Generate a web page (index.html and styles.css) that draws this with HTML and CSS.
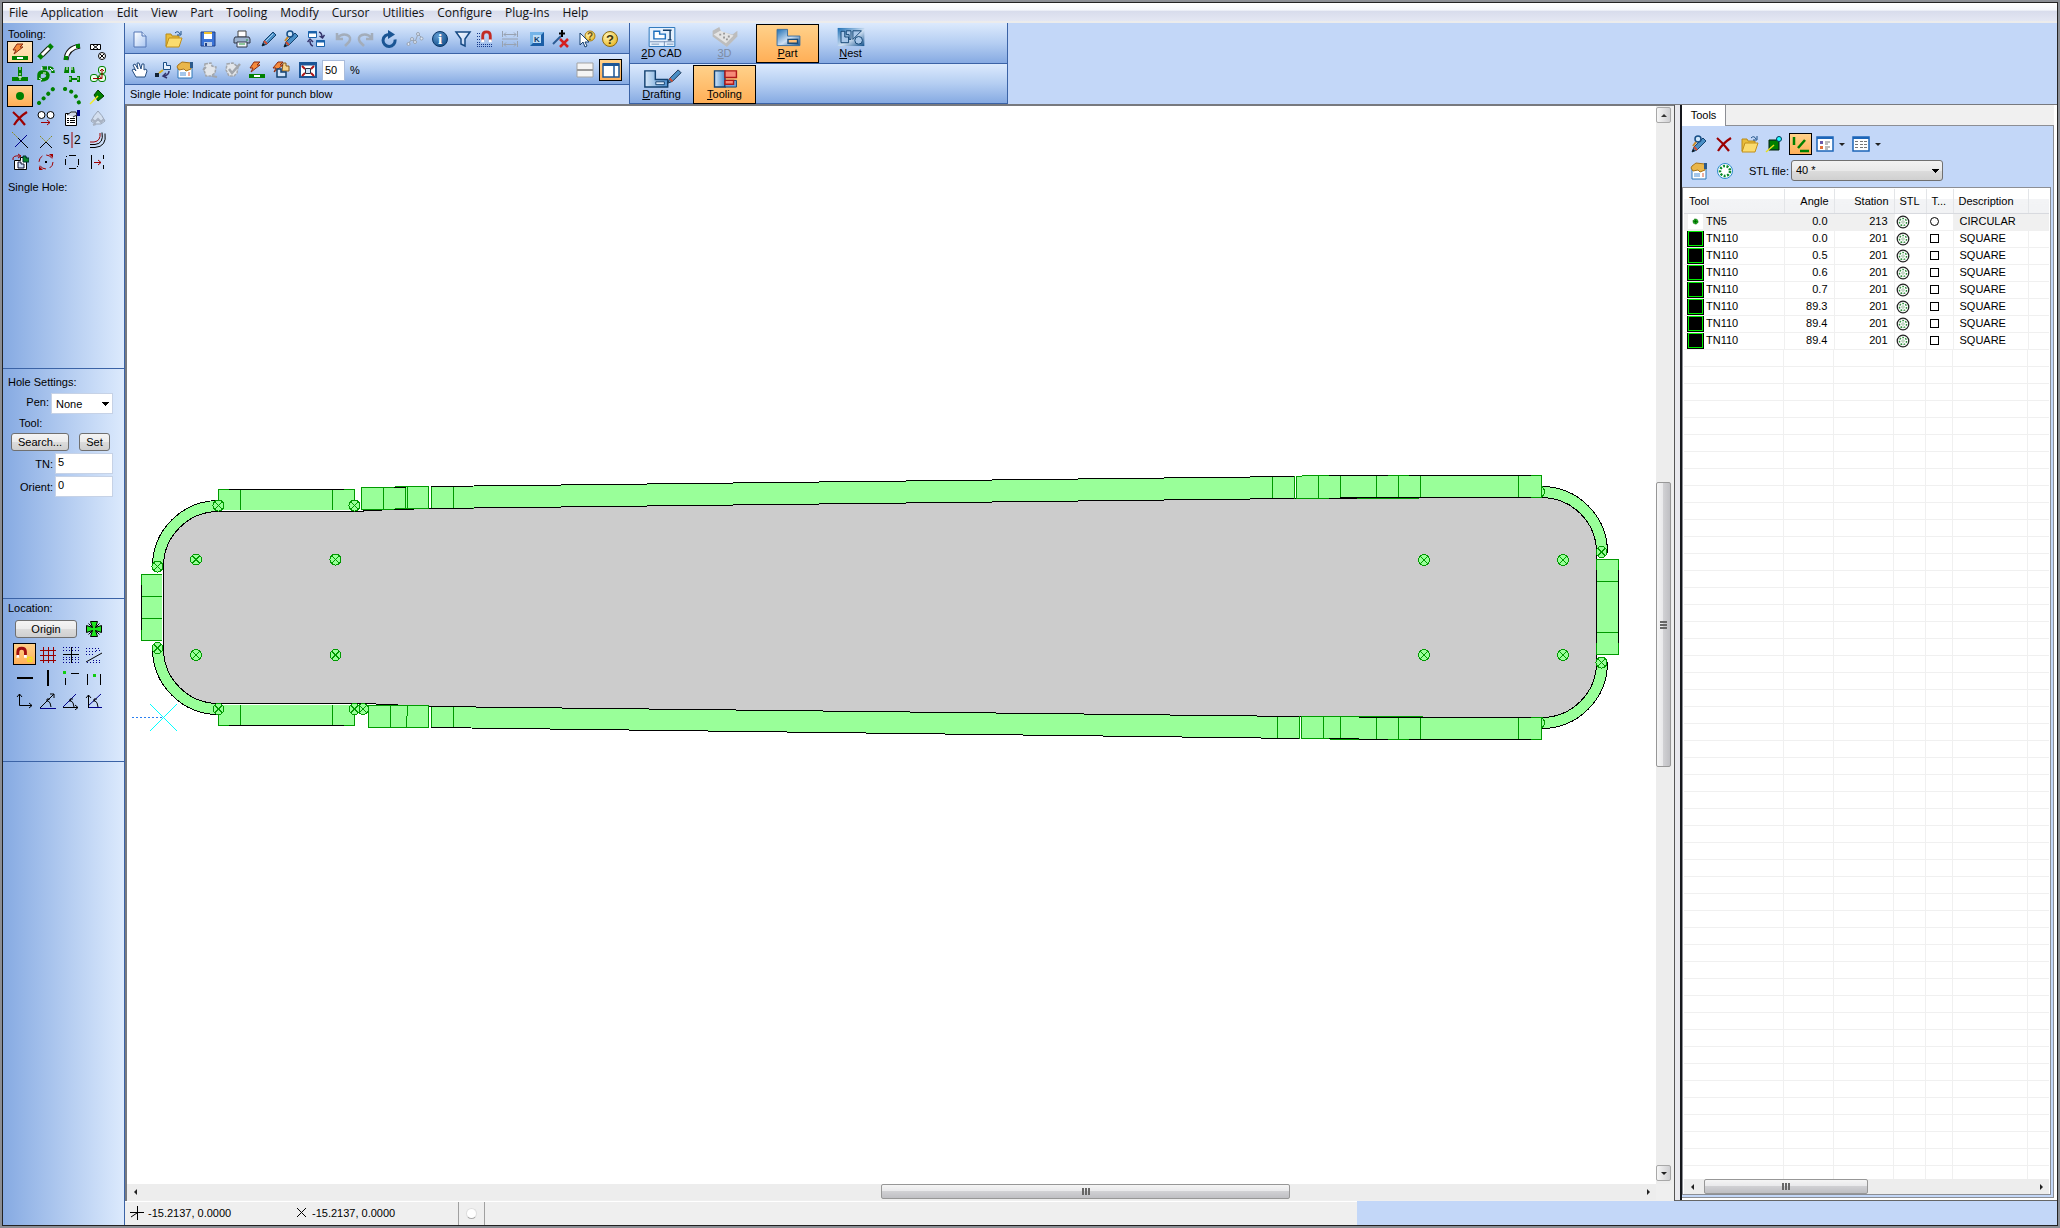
FILE: index.html
```html
<!DOCTYPE html>
<html lang="en">
<head>
<meta charset="utf-8">
<title>Part Tooling</title>
<link rel="stylesheet" href="styles.css">
</head>
<body>
<svg class="defs" aria-hidden="true">
  <defs>
    <linearGradient id="g-page" x1="0" y1="0" x2="1" y2="1"><stop offset="0" stop-color="#fff"/><stop offset="1" stop-color="#a9c6f2"/></linearGradient>
    <linearGradient id="g-steel" x1="0" y1="0" x2="1" y2="1"><stop offset="0" stop-color="#1d6fb4"/><stop offset=".55" stop-color="#cfe0f3"/><stop offset="1" stop-color="#13518c"/></linearGradient>
    <linearGradient id="g-sheet" x1="0" y1="0" x2="1" y2="0"><stop offset="0" stop-color="#d5e6f8"/><stop offset="1" stop-color="#4d90cf"/></linearGradient>
    <radialGradient id="g-gold" cx=".35" cy=".3" r=".8"><stop offset="0" stop-color="#fff6b8"/><stop offset="1" stop-color="#e8b41c"/></radialGradient>
    <radialGradient id="g-info" cx=".35" cy=".3" r=".8"><stop offset="0" stop-color="#5f9ad0"/><stop offset="1" stop-color="#0f4a86"/></radialGradient>
    <symbol id="i-bolt" viewBox="0 0 18 18"><path d="M6 1h6L9 4h3L3 11l2-4H2z" fill="#f58a3c" stroke="#8a2a10"/><path d="M1 13h16v4H1z" fill="#008000"/><path d="M6 14h6v2H6z" fill="#fff"/></symbol>
    <symbol id="i-folder" viewBox="0 0 18 18"><path d="M1 4h5l1 2h7v3H5l-4 7z" fill="#e9bd3a" stroke="#b98a17"/><path d="M4 8h13l-3 9H1z" fill="#fbdc6e" stroke="#c2901a"/><path d="M10 3q3-3 5 1M16 1v4h-4" fill="none" stroke="#1b4f86"/></symbol>
    <symbol id="i-find" viewBox="0 0 18 18"><path d="M2 17l2-5L13 3l3 3-9 9z" fill="#4a8fc6" stroke="#15436f"/><path d="M2 17l1-3 2 2z" fill="#111"/><path d="M4 12l3 3" stroke="#d24c30" stroke-width="2"/><circle cx="8" cy="4" r="3" fill="#cfe7fb" stroke="#164e86" stroke-width="1.5"/><path d="M6 7L3 11" stroke="#c98a28" stroke-width="2"/></symbol>
    <symbol id="i-card" viewBox="0 0 18 18"><path d="M2 6h14v11H2z" fill="#fff" stroke="#2c76b8"/><path d="M2 4l4-3 9 1v6l-5 2-2-2-5 1-2-3z" fill="#e9b64a" stroke="#a8741a"/><path d="M14 1h3v6h-3z" fill="#2b5a8c"/><path d="M4 12h6M4 14h6" stroke="#4a8ed6"/><path d="M12 12h2M12 14h2" stroke="#e2603a"/></symbol>
    <symbol id="i-x" viewBox="0 0 18 18"><path d="M2 3q6 5 12 13M16 3Q8 8 3 16" fill="none" stroke="#9c0000" stroke-width="2.2"/></symbol>
    <symbol id="i-wheel" viewBox="0 0 18 18"><circle cx="9" cy="9" r="6.500" fill="#fff" stroke="#222" stroke-width="1.4"/><circle cx="9" cy="9" r="4" fill="none" stroke="#2f8f3c" stroke-width="1.6" stroke-dasharray="2 1.5"/><circle cx="9" cy="9" r="1.4" fill="none" stroke="#9ab89c"/></symbol>
    <symbol id="i-magnet" viewBox="0 0 18 18"><path d="M5 12V6q0-4 4-4t4 4v6" fill="none" stroke="#c22a22" stroke-width="3"/><path d="M5 10v3M13 10v3" stroke="#fff" stroke-width="3"/></symbol>
    <g id="hole"><circle r="5.5" fill="#9f9" stroke="#090"/><path d="M-4-4L4 4M4-4L-4 4" stroke="#090"/></g>
  </defs>
</svg>

<div class="app">
  <nav class="menu">
    <a href="#">File</a><a href="#">Application</a><a href="#">Edit</a><a href="#">View</a><a href="#">Part</a><a href="#">Tooling</a><a href="#">Modify</a><a href="#">Cursor</a><a href="#">Utilities</a><a href="#">Configure</a><a href="#">Plug-Ins</a><a href="#">Help</a>
  </nav>
  <div class="body">
    <aside class="side">
      <section class="sec sec-tooling">
        <h2>Tooling:</h2>
        <div class="tools">
          <button class="on light" aria-label="Punch"><svg><use href="#i-bolt"/></svg></button>
          <button aria-label="Line"><svg viewBox="0 0 18 18"><path d="M2 15L15 2" stroke="#008000" stroke-width="5"/><path d="M5 12l7-7" stroke="#222" stroke-width="5"/><path d="M5 12l7-7" stroke="#fff" stroke-width="3"/></svg></button>
          <button aria-label="Arc"><svg viewBox="0 0 18 18"><path d="M3 17Q4 5 17 3" fill="none" stroke="#111" stroke-width="5"/><path d="M3 17Q4 5 17 3" fill="none" stroke="#fff" stroke-width="3"/><path d="M1 13h4v4H1zM13 1h4v4h-4z" fill="#008000"/></svg></button>
          <button aria-label="Shapes"><svg viewBox="0 0 18 18" fill="#fff" stroke="#000"><path d="M1.500 1.500h10v5h-10zM4 2l5 4M9 2L4 6" /><circle cx="13" cy="13" r="3.500"/><path d="M11 11l4 4M15 11l-4 4"/></svg></button>
          <button aria-label="Corner"><svg viewBox="0 0 18 18"><path d="M7 2h4v10H7zM1 12h16v4H1z" fill="#008000"/><path d="M9 2v3M9 8v2M7 12h4M9 11v4" stroke="#fff"/></svg></button>
          <button aria-label="Contour"><svg viewBox="0 0 18 18" fill="none"><path d="M5 3h8q3 0 3 5" stroke="#008000" stroke-width="3.500" stroke-dasharray="5 1"/><path d="M2 15V10q0-3 4-3t5 3q0 5-7 5" stroke="#008000" stroke-width="3.500"/><path d="M5 2v3M13 3l3 3M2 13l3 2M6 8h3" stroke="#fff"/></svg></button>
          <button aria-label="Slots"><svg viewBox="0 0 18 18"><path d="M2 2h4v6H1zM8 2h3l1 6H8zM6 11h3v2h5v-2h3v6h-3v-2H9v2H6z" fill="#008000"/><path d="M4 2v3M9 2v3M7 12v3M15 12v3" stroke="#fff"/></svg></button>
          <button aria-label="Path"><svg viewBox="0 0 18 18" fill="none"><rect x="9.500" y="1.500" width="7" height="7" rx="2.500" fill="#eafbe9" stroke="#008000"/><rect x="1.500" y="9.500" width="7" height="7" rx="2.500" fill="#eafbe9" stroke="#008000"/><rect x="9.500" y="9.500" width="7" height="7" rx="2.500" fill="#eafbe9" stroke="#008000"/><path d="M4 13.500h9V4M10 11l3 2.500M11 6l2-2 2 2" stroke="#a00000"/></svg></button>
          <button class="on" aria-label="Single hole"><svg viewBox="0 0 18 18"><circle cx="9" cy="9" r="4" fill="#008000"/></svg></button>
          <button aria-label="Line of holes"><svg viewBox="0 0 18 18"><path d="M2 16L16 2" stroke="#008000" stroke-width="4" stroke-linecap="round" stroke-dasharray="0.100 6.400"/></svg></button>
          <button aria-label="Arc of holes"><svg viewBox="0 0 18 18"><path d="M2 2Q12 4 16 16" fill="none" stroke="#008000" stroke-width="4" stroke-linecap="round" stroke-dasharray="0.100 6.600"/></svg></button>
          <button aria-label="Pick tool"><svg viewBox="0 0 18 18"><path d="M9 3l6 6-6 5-4-6z" fill="#008000" stroke="#003c00"/><path d="M1 17l8-8" stroke="#f4ee22" stroke-width="1.500"/></svg></button>
          <button aria-label="Delete"><svg><use href="#i-x"/></svg></button>
          <button aria-label="Order"><svg viewBox="0 0 18 18"><circle cx="4.500" cy="6" r="3.500" fill="#fff" stroke="#000"/><circle cx="13.500" cy="6" r="3.500" fill="#fff" stroke="#000"/><path d="M4 13.500h9M10 11l3 2.500-3 2.500" fill="none" stroke="#a00000"/></svg></button>
          <button aria-label="Properties"><svg viewBox="0 0 18 18"><path d="M2.500 4.500h11v12h-11z" fill="#fff" stroke="#000"/><path d="M4 6l4-3h5l1 3-4 2" fill="#cfd6e8" stroke="#222"/><path d="M14 1h3v6h-3z" fill="#00008b"/><path d="M4 9.500h2M4 11.500h2M4 13.500h2M7 9.500h5M7 11.500h5M7 13.500h5" stroke="#000"/></svg></button>
          <button aria-label="Rotate" disabled><svg viewBox="0 0 18 18" fill="none" stroke="#9aa6b8"><path d="M9 2q4 4 7 10l-4 3H6l-4-3Q5 6 9 2z" fill="#d3dfef"/><path d="M3 10l3 3 3-3 3 3 3-3M4 16l3-1" stroke="#a8b2c2" stroke-width="2"/></svg></button>
          <button aria-label="Trim"><svg viewBox="0 0 18 18"><path d="M1 1l6 6" stroke="#8c8c20" stroke-dasharray="2 1"/><path d="M7 7l10 10" stroke="#000"/><path d="M16 4L4 16" stroke="#00008b"/></svg></button>
          <button aria-label="Trim both"><svg viewBox="0 0 18 18"><path d="M3 5l6 6M15 5l-6 6" stroke="#8c8c20" stroke-dasharray="2 1"/><path d="M9 11l-6 6M9 11l6 6" stroke="#000"/></svg></button>
          <button aria-label="Split"><svg viewBox="0 0 18 18"><text class="digit" x="0" y="13">5</text><text class="digit" x="11" y="13">2</text><path d="M9 1v16" stroke="#a00000"/></svg></button>
          <button aria-label="Offset"><svg viewBox="0 0 18 18" fill="none" stroke="#000"><path d="M1 11h4q7-1 6-9" stroke="#a00000"/><path d="M1 13.500h5q9-1 7-12M1 16.500h5q12-1 10-14"/></svg></button>
          <button aria-label="Copy contour"><svg viewBox="0 0 18 18"><path d="M3.500 7.500h6v-3h6v12h-12z" fill="#fff" stroke="#000"/><path d="M7 9h3v2h3v4H7z" fill="#cfe2fa" stroke="#113"/><path d="M12 3h3v2h3v4h-6z" fill="#0a8a2a" stroke="#033"/><path d="M2 7q-1-5 7-4M7 1l3 2-3 2" fill="none" stroke="#a00000"/></svg></button>
          <button aria-label="Revolve"><svg viewBox="0 0 18 18"><circle cx="9" cy="9" r="7" fill="none" stroke="#a00000" stroke-dasharray="7 4"/><path d="M8 8h2v2H8z"/><path d="M12 1h4v4zM2 13v4h4z" fill="#a00000"/></svg></button>
          <button aria-label="Frame"><svg viewBox="0 0 18 18" fill="none" stroke="#000"><path d="M6 2.500h7M6 15.500h7M2.500 6v6M15.500 6v6M4 3l-1 1M14 14l1-1"/></svg></button>
          <button aria-label="Gap"><svg viewBox="0 0 18 18" fill="none"><path d="M2.500 2v14M14.500 2v4M14.500 12v4" stroke="#000"/><path d="M5 9.500h7M9 7l3 2.500L9 12" stroke="#a00000"/></svg></button>
        </div>
        <h2>Single Hole:</h2>
      </section>
      <section class="sec sec-hole">
        <h2>Hole Settings:</h2>
        <div class="field"><label for="pen">Pen:</label><select id="pen" class="pen"><option>None</option></select></div>
        <p class="tool-label">Tool:</p>
        <div class="pair"><button class="push wide">Search...</button><button class="push">Set</button></div>
        <div class="field"><label for="tn">TN:</label><input id="tn" type="text" value="5"></div>
        <div class="field"><label for="orient">Orient:</label><input id="orient" type="text" value="0"></div>
      </section>
      <section class="sec sec-location">
        <h2>Location:</h2>
        <div class="origin"><button class="push">Origin</button><button class="plain" aria-label="Cross"><svg viewBox="0 0 18 18"><path d="M5.500 1.500h7L10.500 7.500 16.500 5.500v7L10.500 10.500l2 6h-7l2-6-6 2v-7l6 2z" fill="#1ee61e" stroke="#000"/><path d="M3.500 3.500l4 4M14.500 3.500l-4 4M3.500 14.500l4-4M14.500 14.500l-4-4" stroke="#000"/></svg></button></div>
        <div class="snaps">
          <button class="on" aria-label="Magnet"><svg viewBox="0 0 22 20"><path d="M4 13V8q0-4 4-4t4 4v5" fill="none" stroke="#a01010" stroke-width="3"/><path d="M4 11v3M12 11v3" stroke="#fff" stroke-width="3"/><path d="M14.500 13.500h4v4h-4z" fill="none" stroke="#f0e020" stroke-width="1.500"/></svg></button>
          <button aria-label="Grid"><svg viewBox="0 0 18 18"><path d="M4.500 1v16M9.500 1v16M14.500 1v16M1 4.500h16M1 9.500h16M1 14.500h16" stroke="#900"/></svg></button>
          <button aria-label="Ortho"><svg viewBox="0 0 18 18"><path d="M1 1.500h16M1 4.500h16M1 13.500h16M1 16.500h16M1 11.500h16" stroke="#00008b" stroke-dasharray="1 2"/><path d="M1 8.500h16M9.500 1v16" stroke="#000"/></svg></button>
          <button aria-label="Angle"><svg viewBox="0 0 18 18"><path d="M1 2.500h14M1 5.500h10M1 8.500h9M8 14.500h9M2 16.500h15M11 4.500h6" stroke="#00008b" stroke-dasharray="1 2"/><path d="M1 16L17 7" stroke="#000"/></svg></button>
          <button aria-label="Horizontal"><svg viewBox="0 0 18 18"><path d="M1 9h16" stroke="#000" stroke-width="2"/></svg></button>
          <button aria-label="Vertical"><svg viewBox="0 0 18 18"><path d="M9 1v16" stroke="#000" stroke-width="2"/></svg></button>
          <button aria-label="Edge snap"><svg viewBox="0 0 18 18"><path d="M1 2h3v3H1z" fill="#1c1"/><path d="M3.500 9v7M9 4.500h8" stroke="#000"/></svg></button>
          <button aria-label="Middle snap"><svg viewBox="0 0 18 18"><path d="M8 5h3v3H8z" fill="#1c1"/><path d="M2.500 5v11M15.500 5v11" stroke="#000"/></svg></button>
          <button aria-label="Axes"><svg viewBox="0 0 18 18" fill="none" stroke="#000"><path d="M3.500 2v11.500H16M1 5l2.500-3L6 5M13 11l3 2.500-3 2.500"/></svg></button>
          <button aria-label="Polar"><svg viewBox="0 0 18 18" fill="none" stroke="#000"><path d="M1 16L15 2M11 2h4v4M8 8q4 2 4 7M8 10V7h3"/><path d="M1 16.500h16" stroke="#00008b"/></svg></button>
          <button aria-label="Polar horizontal"><svg viewBox="0 0 18 18" fill="none" stroke="#000"><path d="M1 15L14 2" stroke="#00008b"/><path d="M1 15.500h15M13 13l3 2.500-3 2.500M8 8q4 2 4 7M8 10V7h3"/></svg></button>
          <button aria-label="Polar vertical"><svg viewBox="0 0 18 18" fill="none" stroke="#000"><path d="M3 14L16 2M3 15.500h14" stroke="#00008b"/><path d="M3.500 16V3M1 6l2.500-3L6 6M9 8q4 2 4 7M9 10V7h3"/></svg></button>
        </div>
      </section>
    </aside>

    <main class="main">
      <header class="bars">
        <div class="bars-left">
          <div class="bar bar-file">
            <button aria-label="New"><svg viewBox="0 0 18 18"><path d="M3 2h8l4 4v11H3z" fill="url(#g-page)" stroke="#5577b5"/><path d="M11 2v4h4" fill="#dce9fb" stroke="#5577b5"/></svg></button>
            <button aria-label="Open"><svg><use href="#i-folder"/></svg></button>
            <button aria-label="Save"><svg viewBox="0 0 18 18"><path d="M2 2h14v14H2z" fill="#3c74d6" stroke="#1f3f86"/><path d="M5 2h8v7H5z" fill="#fff"/><path d="M5 2h8v2H5z" fill="#f0c030"/><path d="M5 12h8v4H5z" fill="#b9cbe6"/><path d="M6 13h2v3H6z" fill="#1f3f86"/></svg></button>
            <button aria-label="Print"><svg viewBox="0 0 18 18"><path d="M5 1h8v6H5z" fill="#fff" stroke="#444"/><path d="M2 7h14l1 2v4H1V9z" fill="#9db3cf" stroke="#333a4a"/><path d="M4 12h10v5H4z" fill="#f2f6fc" stroke="#333a4a"/><path d="M6 14h6M13 10h2" stroke="#2a9a3a"/></svg></button>
            <button aria-label="Pencil"><svg viewBox="0 0 18 18"><path d="M2 16l2-5L13 2l3 3-9 9z" fill="#4a8fc6" stroke="#15436f"/><path d="M5 12l8-8" stroke="#a9d2f2"/><path d="M2 16l1-3 2 2z" fill="#111"/><path d="M4 11l3 3" stroke="#d24c30" stroke-width="2"/></svg></button>
            <button aria-label="Find"><svg><use href="#i-find"/></svg></button>
            <button aria-label="Exchange"><svg viewBox="0 0 18 18"><path d="M1.500 1.500h8v6h-8zM9.500 10.500h8v6h-8z" fill="#fff" stroke="#1b62ab"/><path d="M1 2.500h9M9 11.500h9" stroke="#1b62ab" stroke-width="2"/><path d="M12 2q3 1 3 5M12.500 6l3 2 2-3M6 16q-3-1-3-5M.500 12L3 9l3 3" fill="none" stroke="#34346c" stroke-width="1.500"/></svg></button>
            <button aria-label="Undo" disabled><svg viewBox="0 0 18 18"><path d="M3 3v6h6M3 8q5-5 10-3t2 7l-4 4" fill="none" stroke="#a3adba" stroke-width="2.500"/></svg></button>
            <button aria-label="Redo" disabled><svg viewBox="0 0 18 18"><path d="M15 3v6H9M15 8Q10 3 5 5t-2 7l4 4" fill="none" stroke="#a3adba" stroke-width="2.500"/></svg></button>
            <button aria-label="Refresh"><svg viewBox="0 0 18 18"><path d="M10 4.500a6 6 0 1 0 5 5" fill="none" stroke="#1a5594" stroke-width="3"/><path d="M8 0l7 4.500L8 9z" fill="#1a5594"/></svg></button>
            <button aria-label="Polyline" disabled><svg viewBox="0 0 18 18" fill="#dfe9f8" stroke="#98a2b0"><path d="M2 14l4-5 3 3 3-8 4 4" fill="none"/><circle cx="2.500" cy="14" r="1.500"/><circle cx="6" cy="9" r="1.500"/><circle cx="9" cy="12" r="1.500"/><circle cx="12" cy="4" r="1.500"/><circle cx="15.500" cy="8.500" r="1.500"/></svg></button>
            <button aria-label="Information"><svg viewBox="0 0 18 18"><circle cx="9" cy="9" r="7.500" fill="url(#g-info)" stroke="#0b3768"/><text class="glyph serif" x="9" y="14">i</text></svg></button>
            <button aria-label="Filter"><svg viewBox="0 0 18 18"><path d="M2 2h14l-5 7v7l-4-2V9z" fill="url(#g-page)" stroke="#174a83" stroke-width="1.500"/></svg></button>
            <button aria-label="Snap"><svg viewBox="0 0 18 18"><path d="M1 3.500h3M1 6.500h3M1 9.500h3M1 12.500h3M1 14.500h16M1 16.500h16" stroke="#163a8b" stroke-dasharray="1 1"/><use href="#i-magnet" x="2" y="0" width="17" height="17"/></svg></button>
            <button aria-label="Dimension" disabled><svg viewBox="0 0 18 18" fill="none" stroke="#98a2b0"><path d="M1.500 1v6M16.500 1v6M3 4.500h12M5 2.500l-2 2 2 2M13 2.500l2 2-2 2M1.500 11v6M16.500 11v6M3 14.500h12M5 12.500l-2 2 2 2M13 12.500l2 2-2 2M1 9h16"/></svg></button>
            <button aria-label="Keyboard"><svg viewBox="0 0 18 18"><path d="M2 2h14v14H2z" fill="#1a5ea6"/><path d="M2 2h14l-3 3H5v8l-3 3z" fill="#75b4e8"/><path d="M5 5h8v8H5z" fill="#bcdcf6"/><text class="glyph key" x="9" y="12">K</text></svg></button>
            <button aria-label="Clear point"><svg viewBox="0 0 18 18"><path d="M1 14L9 6" stroke="#2c5c95" stroke-width="2"/><path d="M10 0v7M7 3.500h6" stroke="#000" stroke-width="2"/><path d="M8 9l8 8M16 9l-8 8" stroke="#d42020" stroke-width="2.500"/></svg></button>
            <button aria-label="Context help"><svg viewBox="0 0 18 18"><circle cx="12" cy="6" r="5" fill="url(#g-gold)" stroke="#a8801c"/><text class="glyph small" x="12" y="10">?</text><path d="M2 3v12l3-3 2 5 2-1-2-4h4z" fill="#fff" stroke="#173f6d"/></svg></button>
            <button aria-label="Help"><svg viewBox="0 0 18 18"><circle cx="9" cy="9" r="7.500" fill="url(#g-gold)" stroke="#8c6a12"/><text class="glyph dark" x="9" y="14">?</text></svg></button>
          </div>
          <div class="bar bar-view">
            <div class="view-icons">
              <button aria-label="Pan"><svg viewBox="0 0 18 18"><path d="M6 16L2 9l2-1 2 2L3 4l2-1 3 5-1-6h2l2 6 1-5h2l0 6 2-1 1 2-2 6z" fill="#fff" stroke="#274e80"/></svg></button>
              <button aria-label="Place part"><svg viewBox="0 0 18 18"><path d="M9.500 1.500h3v3h4v4h-7z" fill="#e6f1fd" stroke="#1b4f86"/><path d="M1 12h4v4H1z" fill="#123"/><path d="M5 12l4-3" stroke="#d8b020" stroke-width="2"/><path d="M15 10q0 4-5 5M12 12l-3 3 4 2" fill="none" stroke="#34346c" stroke-width="1.500"/></svg></button>
              <button aria-label="Properties"><svg><use href="#i-card"/></svg></button>
              <button aria-label="Recycle" disabled><svg viewBox="0 0 18 18"><path d="M4 3l6-1 1 3 4 1-1 6-4 3H5l-2-6z" fill="#e3e6ea" stroke="#a2a6ac" stroke-width="1.500" stroke-dasharray="3 1"/><path d="M2 9l3-3M11 15l5 1" stroke="#a2a6ac" stroke-width="2"/></svg></button>
              <button aria-label="Check part" disabled><svg viewBox="0 0 18 18"><path d="M3 3l6-1 5 4-1 6-3 3H5l-3-6z" fill="#e3e6ea" stroke="#a2a6ac" stroke-width="1.500" stroke-dasharray="3 1"/><path d="M5 8l3 4 8-9" fill="none" stroke="#a2a6ac" stroke-width="2.500"/></svg></button>
              <button aria-label="Auto punch"><svg><use href="#i-bolt"/></svg></button>
              <button aria-label="Auto part"><svg viewBox="0 0 18 18"><path d="M11 2h3v3h3v5h-7z" fill="#f3d28a" stroke="#8a5a18"/><path d="M6 1h5L8 4h3L2 11l2-4H1z" fill="#f58a3c" stroke="#8a2a10"/><path d="M5 8h4v3h5v5H5z" fill="#cfe2f8" stroke="#12406f" stroke-width="1.500"/></svg></button>
              <button aria-label="Zoom fit"><svg viewBox="0 0 18 18"><path d="M1 2h16v14H1z" fill="#fff" stroke="#1b5596" stroke-width="2"/><path d="M1 3h16" stroke="#1b5596" stroke-width="3"/><path d="M6.500 7.500h5v5h-5z" fill="#cfe2f8" stroke="#234"/><path d="M3 5l3 3M15 5l-3 3M3 15l3-3M15 15l-3-3" stroke="#b01818" stroke-width="2"/></svg></button>
            </div>
            <input class="zoom" type="text" value="50" aria-label="Zoom"><span>%</span>
            <div class="layouts">
              <button aria-label="Split rows"><svg viewBox="0 0 18 18"><path d="M1 2h16v14H1z" fill="#f4f4f4" stroke="#a3a3a3"/><path d="M1 9h16" stroke="#999" stroke-width="2"/></svg></button>
              <button class="on" aria-label="Split columns"><svg viewBox="0 0 18 18"><path d="M1 3h16v13H1z" fill="#fff" stroke="#1b5596" stroke-width="1.500"/><path d="M1 3.500h16" stroke="#1b5596" stroke-width="3"/><path d="M12 4v12" stroke="#1b5596" stroke-width="1.500"/></svg></button>
            </div>
          </div>
          <p class="prompt">Single Hole: Indicate point for punch blow</p>
        </div>
        <div class="modes">
          <div class="mode-row">
            <button><svg viewBox="0 0 28 21"><path d="M.500.500h27v20H.500z" fill="#e6f1fd" stroke="#2472b8"/><path d="M5.500 4.500h6v3h6v5h-12z" fill="#fff" stroke="#1c6fbd" stroke-width="1.500"/><path d="M15 3.500h9M22.500 4v9M20 13.500h4" stroke="#123c66" stroke-width="1.500"/><path d="M1 15.500h26M16.500 15v5M3 18h8M19 18h7" stroke="#7590b5"/></svg><span><u>2</u>D CAD</span></button>
            <button disabled><svg viewBox="0 0 28 21"><path d="M1 4L8 0l2 5 12 3 5-4v6l-11 11L1 10z" fill="#bdbdbd"/><path d="M2 8l7-4 14 5-8 8z" fill="#e4e4e4"/><path d="M8 8h2M12 7h2M12 11h2M17 10h2M15 13h2" stroke="#999" stroke-width="2"/></svg><span><u>3</u>D</span></button>
            <button class="on"><svg viewBox="0 0 28 21"><path d="M2.500 2.500h11v7h13v10h-24z" fill="url(#g-steel)" stroke="#3a6f9f"/><path d="M14 13h10v4H14z" fill="#ffc078" stroke="#1b4c7a" stroke-width="1.500"/></svg><span><u>P</u>art</span></button>
            <button><svg viewBox="0 0 28 21"><path d="M0 1h28v19H0z" fill="url(#g-steel)"/><path d="M3.500 4.500h4v6h4v6h-8zM9 4h5v9h-2V8H9zM16 4h9L16 13z" fill="#a9c8ea" stroke="#0f4170"/><circle cx="22" cy="14" r="4" fill="#a9c8ea" stroke="#0f4170"/></svg><span><u>N</u>est</span></button>
          </div>
          <div class="mode-row">
            <button><svg class="wide-icon" viewBox="0 0 40 21"><path d="M2 3h11v9h13v8H2z" fill="url(#g-sheet)" stroke="#12406f" stroke-width="1.500"/><path d="M13.500 14.500h9v3h-9z" fill="#dcebfa" stroke="#12406f"/><path d="M26 16l2-5 9-9 3 3-9 9z" fill="#4a8fc6" stroke="#15304f"/><path d="M28 11l3 3" stroke="#d24c30" stroke-width="2"/></svg><span><u>D</u>rafting</span></button>
            <button class="on"><svg viewBox="0 0 28 21"><path d="M3 3h11v17H3z" fill="url(#g-sheet)" stroke="#12406f" stroke-width="1.500"/><path d="M14 13h12v7H14z" fill="#6fa6dc" stroke="#12406f"/><path d="M14 3h12v7H14z" fill="#f78a78" stroke="#b01818" stroke-width="1.500"/><path d="M14 13h9v4h-9z" fill="#f78a78" stroke="#b01818" stroke-width="1.500"/></svg><span><u>T</u>ooling</span></button>
          </div>
        </div>
      </header>

      <div class="work">
        <div class="view">
          <svg class="drawing" viewBox="127 106 1529 1078" preserveAspectRatio="xMinYMin meet" shape-rendering="crispEdges" role="img" aria-label="Part">
            <path fill="#ccc" stroke="#000" d="M218.500 511.500H361L366 510.500L431 508.500L1294 498.500L1357 497.500H1541A55 54 0 0 1 1596.500 552V662A55 55 0 0 1 1541 717.500H1359L1299 716.500L431 706.500L365 703.500H218.500A55 55 0 0 1 163.500 648V566A55 55 0 0 1 218.500 511.500Z"/>
            <g fill="#9f9" stroke="#000">
              <path d="M152.500 566A66 66 0 0 1 218.500 500.500V511.500A55 55 0 0 0 163.500 566Z"/>
              <path d="M152.500 648A66 66 0 0 0 218.500 714.500V703.500A55 55 0 0 1 163.500 648Z"/>
              <path d="M1541.500 486.500A66 66 0 0 1 1607.500 552H1596.500A55 55 0 0 0 1541.500 497.500Z"/>
              <path d="M1541.500 728.500A66 66 0 0 0 1607.500 662H1596.500A55 55 0 0 1 1541.500 717.500Z"/>
            </g>
            <g fill="#9f9" stroke="#090">
              <path d="M218.500 489.500h136v21h-136zM240.500 489.500v21M332.500 489.500v21"/>
              <path d="M218.500 704.500h136v21h-136zM240.500 704.500v21M332.500 704.500v21"/>
              <path d="M141.500 574.500h21v66h-21zM141.500 596.500h21M141.500 618.500h21"/>
              <path d="M1596.500 559.500h22v95h-22zM1596.500 581.500h22M1596.500 632.500h22"/>
              <path d="M361.500 487.500L428.500 486.500V508.500L361.500 509.500ZM383.500 487v22M405.500 487v22M407 487l1 22"/>
              <path d="M368.500 705.500H428.500V727.500H368.500ZM390.500 705.500v22M407.500 705.500l-1 22"/>
              <path d="M431.500 486.500L1294.500 476.500V498.500L431.500 508.500ZM453.500 486.500v21M1272.500 476.500v22"/>
              <path d="M431.500 706.500L1299.500 716.500V738.500L431.500 727.500ZM453.500 706.500v21M1277.500 716.500v22"/>
              <path d="M1296.500 476.500L1307 475.500H1541.500V497.500L1296.500 498.500ZM1318.500 475.500v22M1340.500 475.500v22M1376.500 475.500v22M1398.500 475.500v22M1420.500 475.500v22M1518.500 475.500v22"/>
              <path d="M1301.500 716.500L1541.500 717.500V739.500H1359L1301.500 738.500ZM1323.500 716.500v22M1340.500 716.500v22M1376.500 717.500v22M1398.500 717.500v22M1420.500 717.500v22M1518.500 717.500v22"/>
            </g>
            <path fill="none" stroke="#000" d="M229 489.500H344M229 725.500H344M218 511.500H361M218 703.500H365M141.500 585V630M1618.500 570V643M1596.500 570V643M394 487.500H406M431.500 486.500L1294.500 476.500M431.500 508.500L1294.500 498.500M431.500 706.500L1299.500 716.500M431.500 727.500L1299.500 738.500M1329 475.500H1388M1409 475.500H1531M1329 498.500H1357M1340 497.500H1531M1329 738.500H1359M1359 739.500H1388M1409 739.500H1531M1359 717.500H1531M163.500 566V648"/>
            <path fill="none" stroke="#fff" d="M219 510.500H361M219 704.500H365M162.500 567V647M1295.500 474V497M1300.500 718V740M429.500 485V507M429.500 708V729"/>
            <g>
              <path d="M1542 486.500q5 5 0 10.500M1542 717.500q5 5 0 10.500" fill="#9f9" stroke="#090"/>
              <use href="#hole" x="218.500" y="505.500"/><use href="#hole" x="354.500" y="505.500"/><use href="#hole" x="157.500" y="566.500"/><use href="#hole" x="157.500" y="648"/><use href="#hole" x="218.500" y="709"/><use href="#hole" x="363" y="709"/><use href="#hole" x="354.500" y="709"/>
              <use href="#hole" x="1601.500" y="552"/><use href="#hole" x="1601.500" y="662.500"/>
              <use href="#hole" x="196" y="559.500"/><use href="#hole" x="335.500" y="559.500"/><use href="#hole" x="196" y="655"/><use href="#hole" x="335.500" y="655"/>
              <use href="#hole" x="1424" y="560"/><use href="#hole" x="1563" y="560"/><use href="#hole" x="1424" y="655"/><use href="#hole" x="1563" y="655"/>
            </g>
            <path d="M132 717.500H163" stroke="#2a7ff0" stroke-dasharray="2 2"/>
            <path d="M150 704L177 731M177 704L150 731" stroke="#0ff"/>
          </svg>
          <div class="scroll vert"><span class="sb-btn"><i class="tri up"></i></span><span class="gap g360"></span><span class="thumb g284"><i class="grip"></i></span><span class="gap g399"></span><span class="sb-btn"><i class="tri down"></i></span></div>
          <div class="scroll horiz"><span class="sb-end"><i class="tri left"></i></span><span class="gap g739"></span><span class="thumb g408"><i class="grip"></i></span><span class="gap g350"></span><span class="sb-end"><i class="tri right"></i></span></div>
        </div>

        <aside class="dock">
          <div class="tabs"><button class="tab">Tools</button></div>
          <div class="dock-body">
            <div class="dock-bar">
              <div class="dock-icons">
                <button aria-label="Find tool"><svg><use href="#i-find"/></svg></button>
                <button aria-label="Delete tool"><svg><use href="#i-x"/></svg></button>
                <button aria-label="Open tool"><svg><use href="#i-folder"/></svg></button>
                <button aria-label="Pick tool"><svg viewBox="0 0 18 18"><path d="M4 5h10v10H4z" fill="#063" stroke="#020"/><path d="M5 6h8v8H5z" fill="#008000"/><path d="M1 17l8-7" stroke="#e8e020" stroke-width="1.500"/><circle cx="14" cy="4" r="2.500" fill="#2ff" stroke="#035"/></svg></button>
                <button class="on" aria-label="Angles"><svg viewBox="0 0 18 18"><path d="M2 2v8M6 13l7-8M8 16h9" stroke="#008000" stroke-width="2.500"/></svg></button>
                <button class="drop" aria-label="List view"><svg viewBox="0 0 18 18"><path d="M1 2h16v14H1z" fill="#fff" stroke="#1d66b8" stroke-width="1.500"/><path d="M1 3h16" stroke="#1d66b8" stroke-width="2"/><path d="M4 6h3v3H4z" fill="#6b5aa8"/><path d="M4 11h3v3H4z" fill="#e2703a"/><path d="M9 7h5M9 9h3M9 12h5M9 14h3" stroke="#777"/></svg><i class="tri down"></i></button>
                <button class="drop" aria-label="Columns"><svg viewBox="0 0 18 18"><path d="M1 2h16v14H1z" fill="#fff" stroke="#1d66b8" stroke-width="1.500"/><path d="M1 3h16" stroke="#1d66b8" stroke-width="2"/><path d="M3 6.500h3M3 9.500h3M3 12.500h3M8 6.500h7M8 9.500h7M8 12.500h7" stroke="#777" stroke-dasharray="3 1"/></svg><i class="tri down"></i></button>
              </div>
              <div class="dock-file">
                <button aria-label="Tool properties"><svg><use href="#i-card"/></svg></button>
                <button aria-label="Turret"><svg viewBox="0 0 18 18"><circle cx="9" cy="9" r="7.500" fill="#fff" stroke="#2a8ccc"/><circle cx="9" cy="9" r="5" fill="none" stroke="#0a8a2a" stroke-width="2.500" stroke-dasharray="2 1.500"/></svg></button>
                <label for="stl">STL file:</label>
                <select id="stl" class="stl"><option>40 *</option></select>
              </div>
            </div>
            <div class="list">
              <div class="grid-area">
                <table>
                  <colgroup><col class="c-tool"><col class="c-angle"><col class="c-station"><col class="c-stl"><col class="c-type"><col class="c-desc"><col></colgroup>
                  <thead><tr><th>Tool</th><th class="num">Angle</th><th class="num">Station</th><th>STL</th><th>T...</th><th>Description</th><th></th></tr></thead>
                  <tbody>
                    <tr class="cur"><td><i class="dot"><svg viewBox="0 0 18 18"><circle cx="9" cy="9" r="3" fill="#19a519" stroke="#060" stroke-dasharray="2 1"/><path d="M7 9h4M9 7v4" stroke="#060"/></svg></i>TN5</td><td class="num">0.0</td><td class="num">213</td><td class="ico"><svg><use href="#i-wheel"/></svg></td><td class="ico"><i class="shape round"></i></td><td>CIRCULAR</td><td></td></tr>
                    <tr><td><i class="sq"></i>TN110</td><td class="num">0.0</td><td class="num">201</td><td class="ico"><svg><use href="#i-wheel"/></svg></td><td class="ico"><i class="shape"></i></td><td>SQUARE</td><td></td></tr>
                    <tr><td><i class="sq"></i>TN110</td><td class="num">0.5</td><td class="num">201</td><td class="ico"><svg><use href="#i-wheel"/></svg></td><td class="ico"><i class="shape"></i></td><td>SQUARE</td><td></td></tr>
                    <tr><td><i class="sq"></i>TN110</td><td class="num">0.6</td><td class="num">201</td><td class="ico"><svg><use href="#i-wheel"/></svg></td><td class="ico"><i class="shape"></i></td><td>SQUARE</td><td></td></tr>
                    <tr><td><i class="sq"></i>TN110</td><td class="num">0.7</td><td class="num">201</td><td class="ico"><svg><use href="#i-wheel"/></svg></td><td class="ico"><i class="shape"></i></td><td>SQUARE</td><td></td></tr>
                    <tr><td><i class="sq"></i>TN110</td><td class="num">89.3</td><td class="num">201</td><td class="ico"><svg><use href="#i-wheel"/></svg></td><td class="ico"><i class="shape"></i></td><td>SQUARE</td><td></td></tr>
                    <tr><td><i class="sq"></i>TN110</td><td class="num">89.4</td><td class="num">201</td><td class="ico"><svg><use href="#i-wheel"/></svg></td><td class="ico"><i class="shape"></i></td><td>SQUARE</td><td></td></tr>
                    <tr><td><i class="sq"></i>TN110</td><td class="num">89.4</td><td class="num">201</td><td class="ico"><svg><use href="#i-wheel"/></svg></td><td class="ico"><i class="shape"></i></td><td>SQUARE</td><td></td></tr>
                  </tbody>
                </table>
                <div class="blank"><i class="c-tool"></i><i class="c-angle"></i><i class="c-station"></i><i class="c-stl"></i><i class="c-type"></i><i class="c-desc"></i></div>
              </div>
              <div class="scroll horiz"><span class="sb-end"><i class="tri left"></i></span><span class="gap g4"></span><span class="thumb g164"><i class="grip"></i></span><span class="gap g167"></span><span class="sb-end"><i class="tri right"></i></span></div>
            </div>
          </div>
        </aside>
      </div>

      <footer class="status">
        <div class="cells">
          <span class="cell"><svg viewBox="0 0 16 16"><path d="M1 7.500h14M8.500 1v14M8 8l-6 4" fill="none" stroke="#000"/></svg>-15.2137, 0.0000</span>
          <span class="cell second"><svg viewBox="0 0 16 16"><path d="M4 3l9 9M13 3l-9 9" stroke="#000"/></svg>-15.2137, 0.0000</span>
          <span class="lamp"><i></i></span>
        </div>
      </footer>
    </main>
  </div>
</div>
</body>
</html>
```
FILE: styles.css
```css
* { box-sizing: border-box; }

:root {
  --line: #3b63a6;
  --pale: #c3d7f8;
  --grey: #efefef;
  --rule: #f0f0f0;
  --bar: linear-gradient(#dceafd, #b5cef2 50%, #86aae2);
  --hot: linear-gradient(#ffd18a, #ffaf57);
}

body {
  margin: 0;
  background: #8b8e94;
  font: 11px/14px "Liberation Sans", Arial, sans-serif;
  color: #000;
}

h2, p { margin: 0; font-size: 11px; font-weight: normal; }
i { font-style: normal; }
button { padding: 0; border: 0; background: none; font: inherit; color: inherit; }
input, select { font: inherit; color: inherit; border-radius: 0; }
svg { display: block; flex: none; }
.defs { position: absolute; width: 0; height: 0; }

.app {
  display: flex;
  flex-direction: column;
  height: 100vh;
  border: 2px solid #8b8e94;
  outline: 1px solid #222;
  outline-offset: -3px;
  padding: 1px;
}

/* menu */
.menu {
  display: flex;
  align-items: center;
  gap: 13px;
  height: 20px;
  padding: 2px 0 0 6px;
  background: linear-gradient(#fff, #f4f6fb 40%, #d8dcec 45%, #e4e7f3);
  border-bottom: 2px solid #ececec;
  font: 12px/16px "Open Sans", "Noto Sans", sans-serif;
}
.menu a { color: #111; text-decoration: none; }

.body { flex: 1; min-height: 0; display: grid; grid-template-columns: 122px 1fr; }

/* side panel */
.side {
  background: linear-gradient(90deg, #86aae2, #dceafd);
  border-right: 1px solid var(--line);
}
.sec { border-bottom: 1px solid var(--line); }
.sec h2 { padding-left: 5px; }
.sec-tooling { height: 346px; padding-top: 4px; }
.sec-hole { height: 230px; padding-top: 6px; }
.sec-location { height: 163px; padding-top: 2px; }

.tools {
  display: grid;
  grid-template-columns: repeat(4, 26px);
  grid-auto-rows: 22px;
  padding-left: 4px;
  margin-bottom: 7px;
}
.tools button, .snaps button { display: flex; align-items: center; justify-content: center; }
.tools svg, .snaps svg, .bar svg, .dock-bar svg, .plain svg { width: 18px; height: 18px; }
.on, .tools .on, .snaps .on { border: 1px solid #000; background: var(--hot); }
.tools .light { background: linear-gradient(#ffe3b8, #ffd9a0); }
.digit { font: 12px "Liberation Sans", sans-serif; }

.field { display: flex; justify-content: flex-end; align-items: center; gap: 2px; padding-right: 11px; margin-bottom: 2px; }
.field input { width: 58px; height: 21px; padding: 0 2px 3px; border: 1px solid #c6d2e6; background: #fff; }
.pen {
  width: 62px; height: 21px; padding: 0 0 0 4px; margin-top: 4px;
  border: 1px solid #c6d2e6;
  appearance: none;
  background: linear-gradient(45deg, transparent 50%, #000 50%) 50px 8px / 4px 4px no-repeat,
    linear-gradient(-45deg, transparent 50%, #000 50%) 53px 8px / 4px 4px no-repeat, #fff;
}
.tool-label { padding: 0 0 3px 16px; }
.pair { display: flex; justify-content: space-between; padding: 0 14px 0 8px; margin-bottom: 2px; }
.push {
  width: 31px; height: 18px;
  border: 1px solid #707070; border-radius: 3px;
  background: linear-gradient(#f4f4f4, #ebebeb 50%, #dcdcdc 50%, #cfcfcf);
  line-height: 14px;
}
.push.wide { width: 58px; }
.origin { display: flex; align-items: center; gap: 8px; padding: 5px 0 5px 12px; }
.origin .push { width: 62px; }
.snaps { display: grid; grid-template-columns: repeat(4, 23px); grid-auto-rows: 23px; padding-left: 10px; }
.snaps .on { height: 22px; }
.snaps .on svg { width: 21px; height: 20px; }

/* top bars */
.main { display: flex; flex-direction: column; min-width: 0; min-height: 0; }
.bars { display: flex; height: 81px; background: var(--pale); }
.bars-left { width: 505px; border-right: 1px solid var(--line); }
.bar { height: 31px; padding-top: 2px; background: var(--bar); border-bottom: 1px solid var(--line); align-items: center; }
.bar-file {
  display: grid;
  grid-template-columns: 34px 34px 34px 27px 22px 25px 27px 23px 23px 26px 25px 23px 22px 25px 27px 24px 26px 23px 18px;
  padding-left: 6px;
}
.bar-view { display: flex; gap: 5px; }
.view-icons { display: grid; grid-template-columns: 24px 22px 25px 23px 24px 24px 27px 18px; padding-left: 5px; }
.zoom { width: 23px; height: 21px; padding: 0 0 1px 2px; border: 1px solid #a9bcdb; background: #fff; }
.layouts { display: flex; align-items: center; gap: 5px; margin-left: auto; padding-right: 7px; }
.layouts .on { width: 23px; height: 22px; padding-left: 2px; }
.prompt { padding: 2px 0 0 5px; }
.glyph { font: bold 13px "Liberation Sans", sans-serif; text-anchor: middle; fill: #fff; }
.glyph.serif { font-family: "Liberation Serif", serif; font-size: 15px; }
.glyph.key { font-size: 8px; fill: #123c66; }
.glyph.small { font-size: 10px; fill: #6b5210; }
.glyph.dark { fill: #3d3410; }

.modes { width: 378px; border-right: 1px solid var(--line); }
.mode-row { display: flex; height: 41px; background: var(--bar); border-bottom: 1px solid var(--line); }
.mode-row + .mode-row { height: 40px; }
.mode-row button {
  display: flex; flex-direction: column; align-items: center;
  width: 63px; height: 39px; margin-top: 1px; padding-top: 3px;
}
.mode-row .on { padding-top: 2px; }
.mode-row svg { width: 28px; height: 20px; }
.mode-row .wide-icon { width: 40px; }
.mode-row button:disabled { color: #7e8ba3; }
.mode-row span { line-height: 12px; }

/* work area */
.work { flex: 1; min-height: 0; display: grid; grid-template-columns: 1fr 383px; border-top: 2px solid #77797e; }
.view {
  min-width: 0; min-height: 0;
  display: grid;
  grid-template: 1fr 16px / 1fr 16px;
  background: var(--grey);
  border-left: 2px solid #77797e;
  padding: 0 2px 1px 0;
}
.drawing { width: 100%; height: 100%; min-height: 0; background: #fff; }

.scroll { display: flex; background: #ededed; }
.vert { flex-direction: column; padding: 1px 0 3px; width: 16px; }
.scroll span { display: flex; align-items: center; justify-content: center; flex-basis: 0; }
.scroll .sb-btn { flex: 0 0 16px; width: 15px; border: 1px solid #a8a8a8; border-radius: 2px; background: linear-gradient(90deg, #f6f6f6, #cfcfd2); }
.scroll .sb-end { flex: 0 0 16px; }
.thumb { border: 1px solid #979797; border-radius: 2px; background: linear-gradient(#f5f5f5, #e9e9eb 45%, #d0d0d3 50%, #bfbfc3); }
.horiz .thumb { height: 15px; }
.vert .thumb { width: 15px; background: linear-gradient(90deg, #f5f5f5, #e9e9eb 45%, #d0d0d3 50%, #bfbfc3); }
.grip { width: 8px; height: 7px; background: repeating-linear-gradient(90deg, #666 0 2px, transparent 2px 3px); }
.vert .grip { width: 7px; height: 8px; background: repeating-linear-gradient(#666 0 2px, transparent 2px 3px); }
.g4 { flex-grow: 4; } .g164 { flex-grow: 164; } .g167 { flex-grow: 167; }
.g284 { flex-grow: 284; } .g350 { flex-grow: 350; } .g360 { flex-grow: 360; }
.g399 { flex-grow: 399; } .g408 { flex-grow: 408; } .g739 { flex-grow: 739; }

.tri { width: 0; height: 0; border: 3px solid transparent; }
.tri.up { border-top: 0; border-bottom-color: #333; }
.tri.down { border-bottom: 0; border-top-color: #222; }
.tri.left { border-left: 0; border-right-color: #222; }
.tri.right { border-right: 0; border-left-color: #222; }

/* tools dock */
.dock {
  display: flex; flex-direction: column; min-height: 0;
  margin-top: -1px;
  border-left: 1px solid #555;
  border-bottom: 1px solid #666;
  box-shadow: inset 5px 0 #e9e9ee, inset 7px 0 #15171c;
  padding: 0 3px 2px 7px;
  background: #fff;
}
.tabs { height: 21px; background: #f0f0f0; border-bottom: 1px solid #8c8e94; }
.tab { display: block; height: 21px; width: 44px; padding-bottom: 2px; background: #fff; border-right: 1px solid #8c8e94; }
.dock-body {
  flex: 1; min-height: 0; display: flex; flex-direction: column;
  padding: 0 2px 2px 0;
  background: var(--pale);
  border: 1px solid #8c8e94; border-width: 0 1px 1px 0;
}
.dock-bar { padding: 7px 0 3px 8px; }
.dock-icons { display: grid; grid-template-columns: 25px 26px 24px 24px 27px 36px 36px; align-items: center; }
.dock-icons .on { width: 23px; height: 22px; padding-left: 2px; }
.dock-icons .drop { display: flex; align-items: center; gap: 5px; }
.dock-file { display: flex; align-items: center; height: 29px; padding-top: 2px; }
.dock-file button { margin-right: 8px; }
.dock-file label { margin: 0 2px 0 7px; }
.stl {
  width: 152px; height: 21px; padding: 0 0 1px 4px;
  border: 1px solid #707070; border-radius: 3px;
  appearance: none;
  background: linear-gradient(45deg, transparent 50%, #000 50%) 140px 8px / 4px 4px no-repeat,
    linear-gradient(-45deg, transparent 50%, #000 50%) 143px 8px / 4px 4px no-repeat,
    linear-gradient(#f2f2f2, #e9e9e9 50%, #dcdcdc 50%, #d0d0d0);
}

.list { flex: 1; min-height: 0; display: flex; flex-direction: column; padding: 1px 1px 0; background: #fff; border: 1px solid #8c8e94; }
.grid-area { flex: 1; min-height: 0; display: flex; flex-direction: column; overflow: hidden; }
table { width: 100%; table-layout: fixed; border-collapse: collapse; }
.c-tool { width: 100px; } .c-angle { width: 50px; } .c-station { width: 60px; }
.c-stl { width: 32px; } .c-type { width: 27px; } .c-desc { width: 75px; }
th { height: 24px; padding: 0 5px; font-weight: normal; text-align: left; border-right: 1px solid #e3e5e8; border-bottom: 1px solid #d8dadf; background: linear-gradient(#fff 40%, #f3f4f6 40%, #f1f2f4); overflow: hidden; white-space: nowrap; }
th.num, td.num { text-align: right; }
td { height: 17px; padding: 0 6px; line-height: 15px; border-right: 1px solid var(--rule); border-bottom: 1px solid var(--rule); white-space: nowrap; overflow: hidden; }
th:last-child, td:last-child { border-right: 0; }
td:first-child { padding-left: 4px; }
.cur td { background: #f0f0f0; }
td.ico, .cur .ico { padding: 0; background: #fff; }
td.ico svg { width: 16px; height: 16px; }
.shape { display: block; width: 9px; height: 9px; margin-left: 3px; border: 1px solid #000; }
.shape.round { border-radius: 5px; }
.sq, .dot { display: inline-block; width: 15px; height: 15px; margin-right: 3px; vertical-align: top; }
.sq { border: 1px solid #0e0; background: #000; outline: 1px solid #000; }
.dot { background: #fff; }
.dot svg { width: 15px; height: 15px; }
.blank { flex: 1; display: flex; background: repeating-linear-gradient(transparent 0 16px, var(--rule) 16px 17px); }
.blank i { flex: none; border-right: 1px solid var(--rule); }

/* status bar */
.status { height: 24px; display: flex; background: var(--pale); }
.cells { display: flex; align-items: stretch; width: 64%; max-width: 1232px; background: var(--grey); border-top: 1px solid #fff; }
.cell { display: flex; align-items: center; gap: 3px; width: 165px; padding: 0 0 2px 4px; }
.second { width: 168px; padding-left: 3px; }
.cell svg { width: 16px; height: 16px; }
.lamp { display: flex; align-items: center; justify-content: center; width: 27px; border: 1px solid #a0a0a0; border-width: 0 1px; }
.lamp i { width: 11px; height: 11px; border-radius: 50%; background: #fff; border: 1px solid #ddd; border-bottom-color: #aaa; }
```
